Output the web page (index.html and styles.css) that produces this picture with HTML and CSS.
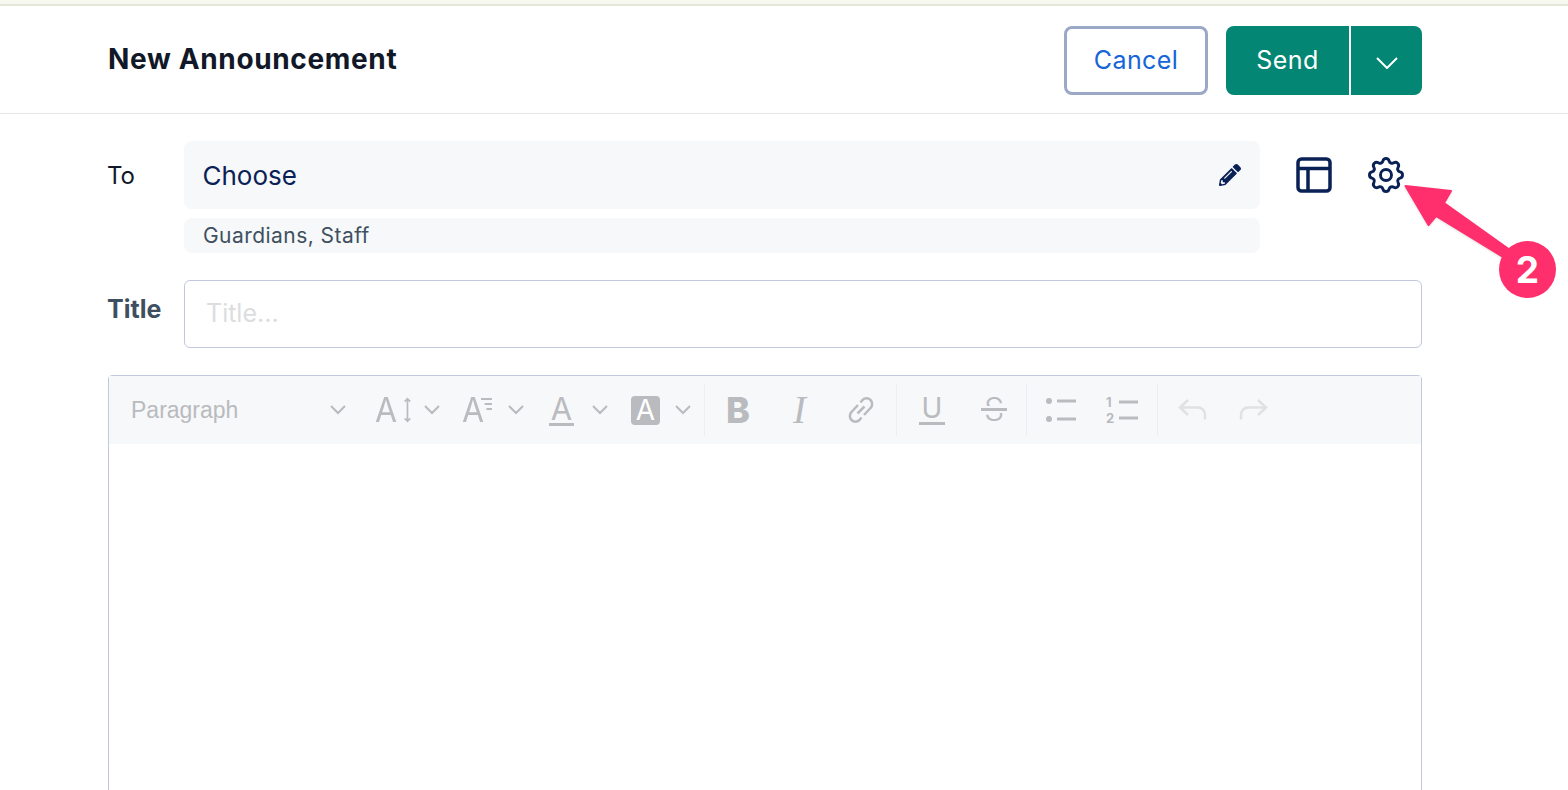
FILE: index.html
```html
<!DOCTYPE html>
<html lang="en">
<head>
    <meta charset="UTF-8">
    <title>New Announcement</title>
    <link rel="stylesheet" href="styles.css">
</head>
<body>
    <div class="top-strip"></div>

    <!-- Header -->
    <header class="page-header">
        <h1>New Announcement</h1>
        <div class="actions">
            <button class="btn-cancel">Cancel</button>
            <div class="send-group">
                <button class="btn-send">Send</button>
                <button class="btn-caret">
                    <svg width="22" height="12" viewBox="0 0 22 12"><path class="caret-line" d="M1 1l10 10L21 1"/></svg>
                </button>
            </div>
        </div>
    </header>

    <main class="form">
        <!-- To row -->
        <div class="to-row">
            <label class="to-label">To</label>
            <div class="to-fields">
                <div class="choose">
                    <span>Choose</span>
                    <svg class="pencil" viewBox="0 0 512 512"><path d="M497.9 142.1l-46.1 46.1c-4.7 4.7-12.3 4.7-17 0l-111-111c-4.7-4.7-4.7-12.3 0-17l46.1-46.1c18.7-18.7 49.1-18.7 67.9 0l60.1 60.1c18.8 18.7 18.8 49.1 0 67.9zM284.2 99.8L21.6 362.4.4 483.9c-2.9 16.4 11.4 30.6 27.8 27.8l121.5-21.3 262.6-262.6c4.7-4.7 4.7-12.3 0-17l-111-111c-4.8-4.7-12.4-4.7-17.1 0zM124.1 339.9c-5.5-5.5-5.5-14.3 0-19.8l154-154c5.5-5.5 14.3-5.5 19.8 0s5.5 14.3 0 19.8l-154 154c-5.5 5.5-14.3 5.5-19.8 0zM88 424h48v36.3l-64.5 11.3-31.1-31.1L51.7 376H88v48z"/></svg>
                </div>
                <div class="chosen">Guardians, Staff</div>
            </div>
            <div class="to-icons">
                <svg class="icon-layout" width="36" height="36" viewBox="0 0 36 36"><rect x="2" y="2" width="32" height="32" rx="3.5"/><path d="M2 11.5h32M12 11.5V34"/></svg>
                <svg class="icon-gear" width="44" height="44" viewBox="0 0 24 24"><path d="M10.325 4.317c.426-1.756 2.924-1.756 3.35 0a1.724 1.724 0 002.573 1.066c1.543-.94 3.31.826 2.37 2.37a1.724 1.724 0 001.065 2.572c1.756.426 1.756 2.924 0 3.35a1.724 1.724 0 00-1.066 2.573c.94 1.543-.826 3.31-2.37 2.37a1.724 1.724 0 00-2.572 1.065c-.426 1.756-2.924 1.756-3.35 0a1.724 1.724 0 00-2.573-1.066c-1.543.94-3.31-.826-2.37-2.37a1.724 1.724 0 00-1.065-2.572c-1.756-.426-1.756-2.924 0-3.35a1.724 1.724 0 001.066-2.573c-.94-1.543.826-3.31 2.37-2.37.996.608 2.296.07 2.572-1.065z"/><path d="M15 12a3 3 0 11-6 0 3 3 0 016 0z"/></svg>
            </div>
        </div>

        <!-- Title row -->
        <div class="title-row">
            <label class="title-label">Title</label>
            <input class="title-input" type="text" placeholder="Title...">
        </div>

        <!-- Editor -->
        <div class="editor">
            <div class="toolbar">
                <div class="tool-group group-heading">
                    <span class="paragraph">Paragraph</span>
                    <svg class="chev" viewBox="0 0 16 10"><path d="M1 1l7 7 7-7"/></svg>
                    <div class="tool size">
                        <span class="glyph-a">A</span>
                        <svg width="8" height="28" viewBox="0 0 8 28"><path d="M4 1v26M.8 4.200L4 1l3.200 3.200M.8 23.800L4 27l3.200-3.200"/></svg>
                    </div>
                    <svg class="chev" viewBox="0 0 16 10"><path d="M1 1l7 7 7-7"/></svg>
                    <div class="tool family">
                        <span class="glyph-a">A</span>
                        <svg width="12" height="14" viewBox="0 0 12 14"><path d="M0 1.500h12M4 7h8M6 12.500h6"/></svg>
                    </div>
                    <svg class="chev" viewBox="0 0 16 10"><path d="M1 1l7 7 7-7"/></svg>
                    <span class="tool color">A</span>
                    <svg class="chev" viewBox="0 0 16 10"><path d="M1 1l7 7 7-7"/></svg>
                    <span class="tool bg">A</span>
                    <svg class="chev" viewBox="0 0 16 10"><path d="M1 1l7 7 7-7"/></svg>
                </div>
                <div class="tool-group group-basic">
                    <span class="glyph-b">B</span>
                    <span class="glyph-i">I</span>
                    <svg class="tool link" width="26" height="26" viewBox="0 0 26 26">
                        <path d="M10 8L3.500 15a5.500 5.500 0 008 8l2-2.500"/>
                        <path d="M16 18l6.500-7a5.500 5.500 0 00-8-8l-2 2.500"/>
                        <path d="M9.500 16.500l7-7"/>
                    </svg>
                </div>
                <div class="tool-group group-style">
                    <span class="glyph-u">U</span>
                    <span class="glyph-s">S</span>
                </div>
                <div class="tool-group group-list">
                    <svg class="tool bullets" width="32" height="26" viewBox="0 0 32 26">
                        <circle cx="4" cy="4" r="3"/><circle cx="4" cy="22" r="3"/>
                        <path class="thick" d="M12 4h19M12 22h19"/>
                    </svg>
                    <div class="numbers">
                        <div class="nums"><span>1</span><span>2</span></div>
                        <svg class="tool" width="19" height="20" viewBox="0 0 19 20"><path class="thick" d="M0 2h19M0 18h19"/></svg>
                    </div>
                </div>
                <div class="tool-group group-history">
                    <svg class="tool faded" width="30" height="24" viewBox="0 0 30 24"><path d="M10 2L2 9.500l8 7.500M2 9.500h18a7 7 0 017 7v5"/></svg>
                    <svg class="tool faded" width="30" height="24" viewBox="0 0 30 24"><path d="M20 2l8 7.500-8 7.500M28 9.500H10a7 7 0 00-7 7v5"/></svg>
                </div>
            </div>
            <div class="editor-body"></div>
        </div>
    </main>

    <!-- Callout arrow drawn over the page -->
    <svg class="callout-arrow" width="170" height="130" viewBox="1395 175 170 130">
        <path class="arrow-shape" d="M1405.500 186L1451 191L1444 203L1510 250L1503 257L1436 216L1428.500 225z"/>
    </svg>
    <div class="callout-badge">2</div>
</body>
</html>
```

FILE: styles.css
```css
/* Reset */
* {
    margin: 0;
    padding: 0;
    box-sizing: border-box;
    font-family: 'Inter', sans-serif;
}

html, body {
    height: 790px;
    overflow: hidden;
    background: #ffffff;
}

.top-strip {
    height: 6px;
    background: #f7f8ef;
    border-bottom: 2px solid #e5e7da;
}

/* Header */
.page-header {
    height: 108px;
    padding: 20px 146px 0 108px;
    display: flex;
    justify-content: space-between;
    align-items: flex-start;
    border-bottom: 1px solid #e4e6ea;
}

h1 {
    font-size: 28px;
    font-weight: 700;
    letter-spacing: 0.65px;
    line-height: 66px;
    color: #111827;
}

.actions {
    display: flex;
    gap: 18px;
}

button {
    height: 69px;
    padding-bottom: 2px;
    font-size: 25px;
    letter-spacing: 0.4px;
    cursor: pointer;
}

.btn-cancel {
    width: 144px;
    background: #ffffff;
    color: #1565d8;
    border: 3px solid #9ca9c6;
    border-radius: 8px;
}

.send-group {
    display: flex;
    gap: 2px;
}

.btn-send,
.btn-caret {
    background: #038673;
    color: #ffffff;
    border: none;
}

.btn-send {
    width: 123px;
    border-radius: 8px 0 0 8px;
}

.btn-caret {
    width: 71px;
    display: flex;
    justify-content: center;
    align-items: center;
    border-radius: 0 8px 8px 0;
    padding: 5px 0 0;
}

.caret-line {
    fill: none;
    stroke: #ffffff;
    stroke-width: 2;
}

/* Form */
.form {
    padding: 27px 146px 0 108px;
}

.to-row {
    display: flex;
    align-items: flex-start;
}

.to-label {
    width: 76px;
    margin-left: -1px;
    margin-right: 1px;
    font-size: 24px;
    line-height: 70px;
    color: #111827;
}

.to-fields {
    width: 1076px;
}

.choose {
    height: 68px;
    padding: 0 19px 0 18.5px;
    display: flex;
    justify-content: space-between;
    align-items: center;
    background: #f7f8fa;
    border-radius: 8px;
    font-size: 26px;
    color: #0a2156;
}

.pencil {
    width: 22px;
    height: 22px;
    fill: #0a2156;
}

.chosen {
    height: 35px;
    margin-top: 9px;
    padding: 0 19px;
    background: #f7f8fa;
    border-radius: 8px;
    font-size: 21px;
    letter-spacing: 0.45px;
    line-height: 35px;
    color: #3e5060;
}

.to-icons {
    display: flex;
    align-items: center;
    height: 68px;
    margin-left: 36px;
}

.icon-layout rect,
.icon-layout path,
.icon-gear path {
    fill: none;
    stroke: #0a2156;
}

.icon-layout rect,
.icon-layout path {
    stroke-width: 3.500;
}

.icon-gear {
    margin-left: 32px;
}

.icon-gear path {
    stroke-width: 1.600;
    stroke-linecap: round;
    stroke-linejoin: round;
}

.title-row {
    display: flex;
    margin-top: 27px;
}

.title-label {
    width: 76px;
    margin-left: -1px;
    margin-right: 1px;
    font-size: 25px;
    font-weight: 700;
    line-height: 58px;
    color: #3e5060;
}

.title-input {
    width: 1238px;
    height: 68px;
    padding: 0 21px 2px 21px;
    font-size: 25px;
    color: #3e5060;
    border: 1px solid #c3c8dc;
    border-radius: 6px;
    outline: none;
}

.title-input::placeholder {
    color: #dcdddf;
}

/* Editor */
.editor {
    margin-top: 27px;
    height: 600px;
    border: 1px solid #c3c8dc;
    border-radius: 4px 4px 0 0;
}

.toolbar {
    height: 68px;
    display: flex;
    align-items: center;
    background: #f7f8fa;
}

.tool-group {
    height: 52px;
    display: flex;
    align-items: center;
    border-right: 1px solid #eceef1;
}

.group-heading { width: 596px; padding-left: 22px; }
.group-basic { width: 192px; padding-left: 21px; }
.group-style { width: 130px; padding-left: 22px; gap: 36px; }
.group-list { width: 131px; padding-left: 18px; gap: 29px; }
.group-history { padding-left: 20px; gap: 30px; border-right: none; }

.paragraph {
    width: 199px;
    font-family: 'Liberation Sans', sans-serif;
    font-size: 23px;
    color: #b9bbbe;
}

.chev {
    width: 16px;
    height: 10px;
    flex-shrink: 0;
}

.chev path,
.tool path {
    fill: none;
    stroke: #b9bbbe;
    stroke-width: 2;
}

.tool circle {
    fill: #b9bbbe;
}

.tool .thick {
    stroke-width: 3;
}

.link path {
    stroke-width: 2.500;
}

.glyph-a {
    font-size: 32px;
    font-weight: 400;
    line-height: 26px;
    color: #b9bbbe;
    transform: scaleY(1.08);
}

.size,
.family {
    display: flex;
    align-items: center;
}

.size { width: 36px; margin-left: 29px; margin-right: 13px; }
.size svg { margin-left: 7px; }

.family { width: 30px; margin-left: 22px; margin-right: 16px; }
.family svg { margin-left: -3px; margin-bottom: 12px; }

.color {
    width: 25px;
    height: 29px;
    margin: 2px 18px 0 25px;
    font-size: 31px;
    font-weight: 400;
    line-height: 24px;
    text-align: center;
    color: #b9bbbe;
    border-bottom: 3px solid #b9bbbe;
}

.bg {
    width: 29px;
    height: 29px;
    margin-left: 23px;
    margin-right: 15px;
    background: #b9bbbe;
    border-radius: 4px;
    font-size: 28px;
    font-weight: 400;
    line-height: 29px;
    text-align: center;
    color: #ffffff;
}

.glyph-b {
    width: 24px;
    font-size: 36px;
    font-weight: 800;
    line-height: 36px;
    color: #b9bbbe;
}

.glyph-i {
    margin-left: 43px;
    width: 20px;
    font-family: 'Liberation Serif', serif;
    font-style: italic;
    font-size: 39px;
    line-height: 36px;
    color: #b9bbbe;
}

.link {
    margin-left: 35px;
}

.glyph-u {
    width: 26px;
    height: 29px;
    margin-top: 1px;
    font-size: 28px;
    font-weight: 400;
    line-height: 24px;
    text-align: center;
    color: #b9bbbe;
    border-bottom: 3px solid #b9bbbe;
}

.glyph-s {
    position: relative;
    width: 26px;
    font-size: 32px;
    font-weight: 300;
    line-height: 26px;
    text-align: center;
    color: #b9bbbe;
}

.glyph-s::after {
    content: "";
    position: absolute;
    left: 0;
    right: 0;
    top: 11px;
    height: 3px;
    background: #b9bbbe;
    box-shadow: 0 -2px 0 #f7f8fa, 0 2px 0 #f7f8fa;
}

.numbers {
    display: flex;
    align-items: center;
    gap: 4px;
}

.nums {
    display: flex;
    flex-direction: column;
    width: 9px;
    font-size: 13px;
    font-weight: 700;
    line-height: 16px;
    color: #b9bbbe;
}

.tool.faded path {
    stroke: #dfe1e3;
    stroke-width: 2.500;
}

/* Callout on top of the page */
.callout-arrow {
    position: absolute;
    left: 1395px;
    top: 175px;
    filter: drop-shadow(0 1px 1px rgba(0, 0, 0, 0.12));
}

.arrow-shape {
    fill: #ff2f6e;
    stroke: #ff2f6e;
    stroke-width: 2;
    stroke-linejoin: round;
}

.callout-badge {
    position: absolute;
    left: 1499px;
    top: 241px;
    width: 57px;
    height: 57px;
    border-radius: 50%;
    background: #ff2f6e;
    color: #ffffff;
    font-size: 37px;
    font-weight: 700;
    line-height: 57px;
    text-align: center;
}
```
